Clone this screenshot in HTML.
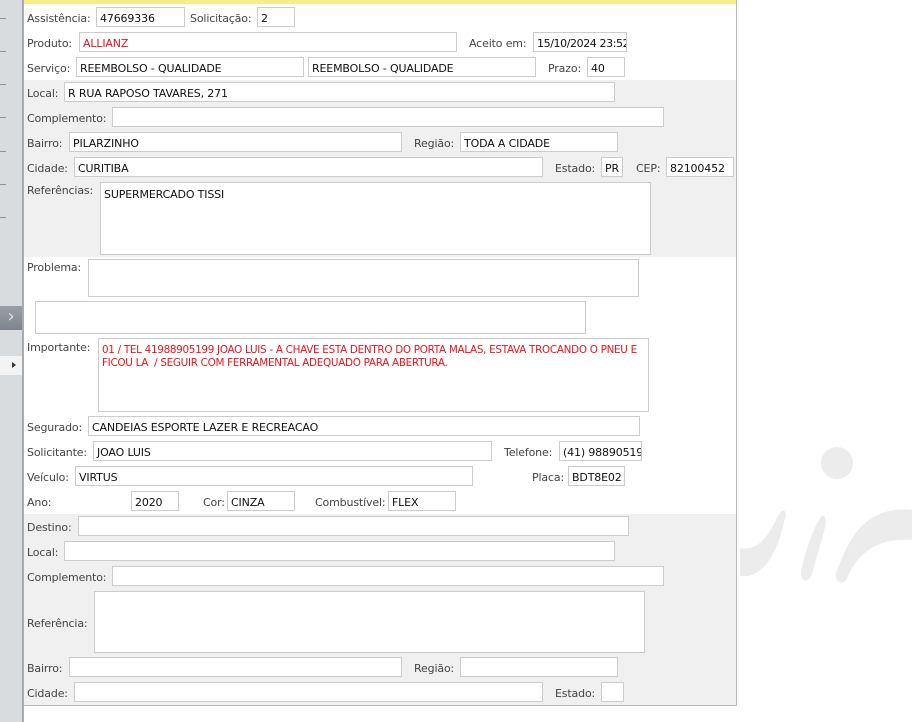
<!DOCTYPE html>
<html><head><meta charset="utf-8"><style>
*{box-sizing:border-box;margin:0;padding:0}
body{width:912px;height:722px;background:#fff;position:relative;overflow:hidden;font-family:"DejaVu Sans","Liberation Sans",sans-serif;font-size:11px;color:#444;letter-spacing:-0.15px}
.a{position:absolute}
.l{position:absolute;white-space:nowrap;line-height:13px;margin-top:1px}
.i{position:absolute;background:#fff;border:1px solid #ccc;height:20px;font-size:11px;color:#111;padding:4px 0 0 3px;white-space:nowrap;overflow:hidden;line-height:13px}
.t{position:absolute;background:#fff;border:1px solid #ccc;font-size:11px;padding:5px 3px;line-height:13px;color:#111}
.g{position:absolute;left:24px;width:712px;background:#f0f0f0}
.tk{position:absolute;left:0;width:6px;height:1px;background:#8a9096}
</style></head><body>
<div class="a" style="left:0;top:0;width:23px;height:722px;background:#d9dcde"></div>
<div class="a" style="left:22px;top:0;width:2px;height:722px;background:#a8acb0"></div>
<div class="tk" style="top:18px"></div><div class="tk" style="top:51px"></div><div class="tk" style="top:84px"></div><div class="tk" style="top:117px"></div><div class="tk" style="top:151px"></div><div class="tk" style="top:184px"></div><div class="tk" style="top:217px"></div>
<div class="a" style="left:0;top:306px;width:22px;height:24px;background:linear-gradient(#9aa0a6,#7d848b);color:#dfe3e6;font-size:18px;text-align:center;line-height:22px">&#x203A;</div>
<div class="a" style="left:0;top:356px;width:22px;height:19px;background:#f3f3f3"></div>
<div class="a" style="left:12px;top:362px;width:0;height:0;border-left:4px solid #333;border-top:3.5px solid transparent;border-bottom:3.5px solid transparent"></div>
<div class="a" style="left:24px;top:0;width:713px;height:706px;border-right:1px solid #bbb;border-bottom:1px solid #bbb"></div>
<div class="a" style="left:24px;top:0;width:712px;height:4px;background:#f5ec8c"></div>
<div class="g" style="top:80px;height:177px"></div>
<div class="g" style="top:514px;height:191px"></div>
<svg class="a" style="left:740px;top:440px" width="172" height="160" viewBox="740 440 172 160"><g fill="#ececec"><circle cx="837" cy="463" r="16"/><path d="M786 514 C780 540 772 570 748 576 L740 576 L740 548 C760 552 770 532 778 516 Q784 506 786 514Z"/><path d="M820 518 C824 512 827 518 825 528 L812 574 C808 584 800 582 801 572 C804 555 812 532 820 518Z"/><path d="M912 510 C878 506 856 524 843 556 L836 572 C834 584 845 586 848 576 C860 550 880 538 912 540Z"/></g></svg>

<div class="l" style="left:27px;top:11px">Assistência:</div><div class="i" style="left:96px;top:7px;width:89px">47669336</div>
<div class="l" style="left:190px;top:11px">Solicitação:</div><div class="i" style="left:257px;top:7px;width:38px">2</div>
<div class="l" style="left:27px;top:36px">Produto:</div><div class="i" style="left:79px;top:32px;width:378px;color:#e8141c">ALLIANZ</div>
<div class="l" style="left:469px;top:36px">Aceito em:</div><div class="i" style="left:533px;top:32px;width:94px;letter-spacing:-0.4px">15/10/2024 23:52</div>
<div class="l" style="left:27px;top:61px">Serviço:</div><div class="i" style="left:76px;top:57px;width:228px">REEMBOLSO - QUALIDADE</div><div class="i" style="left:308px;top:57px;width:228px">REEMBOLSO - QUALIDADE</div>
<div class="l" style="left:548px;top:61px">Prazo:</div><div class="i" style="left:587px;top:57px;width:38px">40</div>
<div class="l" style="left:27px;top:86px">Local:</div><div class="i" style="left:64px;top:82px;width:551px">R RUA RAPOSO TAVARES, 271</div>
<div class="l" style="left:27px;top:111px">Complemento:</div><div class="i" style="left:112px;top:107px;width:552px"></div>
<div class="l" style="left:27px;top:136px">Bairro:</div><div class="i" style="left:69px;top:132px;width:333px">PILARZINHO</div>
<div class="l" style="left:414px;top:136px">Região:</div><div class="i" style="left:460px;top:132px;width:158px">TODA A CIDADE</div>
<div class="l" style="left:27px;top:161px">Cidade:</div><div class="i" style="left:74px;top:157px;width:469px">CURITIBA</div>
<div class="l" style="left:555px;top:161px">Estado:</div><div class="i" style="left:601px;top:157px;width:22px">PR</div>
<div class="l" style="left:636px;top:161px">CEP:</div><div class="i" style="left:666px;top:157px;width:68px">82100452</div>
<div class="l" style="left:27px;top:183px">Referências:</div><div class="t" style="left:100px;top:182px;width:551px;height:73px">SUPERMERCADO TISSI</div>
<div class="l" style="left:27px;top:260px">Problema:</div><div class="t" style="left:88px;top:259px;width:551px;height:38px"></div>
<div class="t" style="left:35px;top:301px;width:551px;height:33px"></div>
<div class="l" style="left:27px;top:340px">Importante:</div><div class="t" style="left:98px;top:338px;width:551px;height:74px;color:#e8141c;font-size:10.4px;letter-spacing:-0.3px;white-space:nowrap;overflow:hidden">01 / TEL 41988905199 JOAO LUIS - A CHAVE ESTA DENTRO DO PORTA MALAS, ESTAVA TROCANDO O PNEU E<br>FICOU LA &nbsp;/ SEGUIR COM FERRAMENTAL ADEQUADO PARA ABERTURA.</div>
<div class="l" style="left:27px;top:420px">Segurado:</div><div class="i" style="left:88px;top:416px;width:552px">CANDEIAS ESPORTE LAZER E RECREACAO</div>
<div class="l" style="left:27px;top:445px">Solicitante:</div><div class="i" style="left:93px;top:441px;width:399px">JOAO LUIS</div>
<div class="l" style="left:504px;top:445px">Telefone:</div><div class="i" style="left:559px;top:441px;width:83px">(41) 988905199</div>
<div class="l" style="left:27px;top:470px">Veículo:</div><div class="i" style="left:75px;top:466px;width:398px">VIRTUS</div>
<div class="l" style="left:532px;top:470px">Placa:</div><div class="i" style="left:568px;top:466px;width:57px">BDT8E02</div>
<div class="l" style="left:27px;top:495px">Ano:</div><div class="i" style="left:131px;top:491px;width:48px">2020</div>
<div class="l" style="left:203px;top:495px">Cor:</div><div class="i" style="left:227px;top:491px;width:68px">CINZA</div>
<div class="l" style="left:315px;top:495px">Combustível:</div><div class="i" style="left:388px;top:491px;width:68px">FLEX</div>
<div class="l" style="left:27px;top:520px">Destino:</div><div class="i" style="left:78px;top:516px;width:551px"></div>
<div class="l" style="left:27px;top:545px">Local:</div><div class="i" style="left:64px;top:541px;width:551px"></div>
<div class="l" style="left:27px;top:570px">Complemento:</div><div class="i" style="left:112px;top:566px;width:552px"></div>
<div class="l" style="left:27px;top:616px">Referência:</div><div class="t" style="left:94px;top:591px;width:551px;height:62px"></div>
<div class="l" style="left:27px;top:661px">Bairro:</div><div class="i" style="left:69px;top:657px;width:333px"></div>
<div class="l" style="left:414px;top:661px">Região:</div><div class="i" style="left:460px;top:657px;width:158px"></div>
<div class="l" style="left:27px;top:686px">Cidade:</div><div class="i" style="left:74px;top:682px;width:469px"></div>
<div class="l" style="left:555px;top:686px">Estado:</div><div class="i" style="left:601px;top:682px;width:23px"></div>
</body></html>
